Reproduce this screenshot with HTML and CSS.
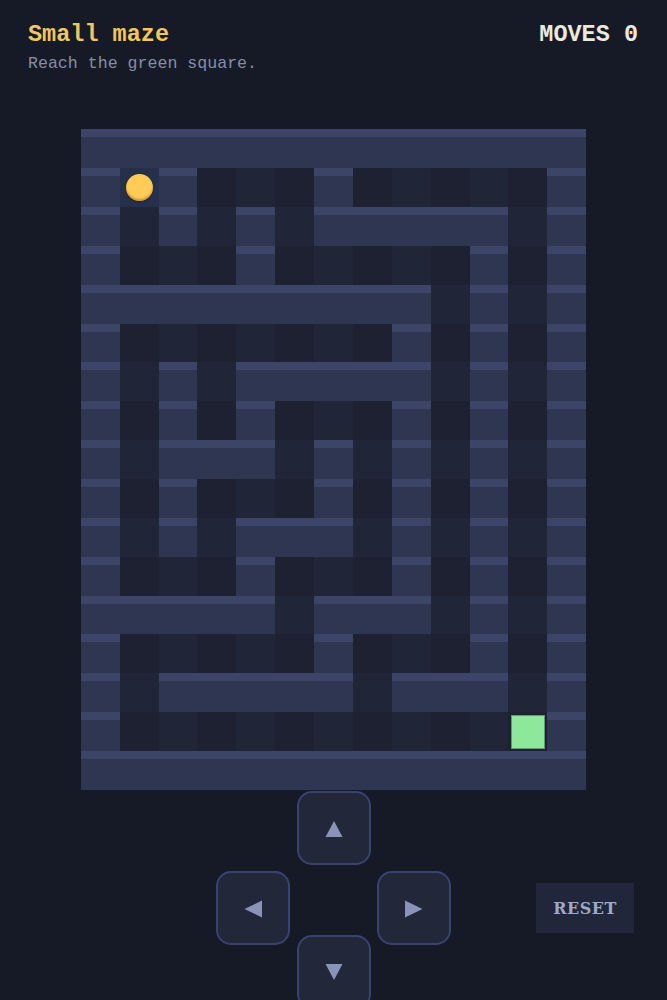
FILE: index.html
```html
<!DOCTYPE html>
<html lang="en">
<head>
<meta charset="utf-8">
<title>Small maze</title>
<link rel="stylesheet" href="styles.css">
</head>
<body>
<header class="top">
  <div class="heading">
    <h1 class="title">Small maze</h1>
    <p class="hint">Reach the green square.</p>
  </div>
  <div class="moves">MOVES 0</div>
</header>

<main class="board">
  <div class="maze">
    <!-- row 0 -->
    <div class="w"></div><div class="w"></div><div class="w"></div><div class="w"></div><div class="w"></div><div class="w"></div><div class="w"></div><div class="w"></div><div class="w"></div><div class="w"></div><div class="w"></div><div class="w"></div><div class="w"></div>
    <!-- row 1 -->
    <div class="w"></div><div class="start"><span class="player"></span></div><div class="w"></div><div class="d"></div><div class="l"></div><div class="d"></div><div class="w"></div><div class="d"></div><div class="l"></div><div class="d"></div><div class="l"></div><div class="d"></div><div class="w"></div>
    <!-- row 2 -->
    <div class="w"></div><div class="l"></div><div class="w"></div><div class="l"></div><div class="w"></div><div class="l"></div><div class="w"></div><div class="w"></div><div class="w"></div><div class="w"></div><div class="w"></div><div class="l"></div><div class="w"></div>
    <!-- row 3 -->
    <div class="w"></div><div class="d"></div><div class="l"></div><div class="d"></div><div class="w"></div><div class="d"></div><div class="l"></div><div class="d"></div><div class="l"></div><div class="d"></div><div class="w"></div><div class="d"></div><div class="w"></div>
    <!-- row 4 -->
    <div class="w"></div><div class="w"></div><div class="w"></div><div class="w"></div><div class="w"></div><div class="w"></div><div class="w"></div><div class="w"></div><div class="w"></div><div class="l"></div><div class="w"></div><div class="l"></div><div class="w"></div>
    <!-- row 5 -->
    <div class="w"></div><div class="d"></div><div class="l"></div><div class="d"></div><div class="l"></div><div class="d"></div><div class="l"></div><div class="d"></div><div class="w"></div><div class="d"></div><div class="w"></div><div class="d"></div><div class="w"></div>
    <!-- row 6 -->
    <div class="w"></div><div class="l"></div><div class="w"></div><div class="l"></div><div class="w"></div><div class="w"></div><div class="w"></div><div class="w"></div><div class="w"></div><div class="l"></div><div class="w"></div><div class="l"></div><div class="w"></div>
    <!-- row 7 -->
    <div class="w"></div><div class="d"></div><div class="w"></div><div class="d"></div><div class="w"></div><div class="d"></div><div class="l"></div><div class="d"></div><div class="w"></div><div class="d"></div><div class="w"></div><div class="d"></div><div class="w"></div>
    <!-- row 8 -->
    <div class="w"></div><div class="l"></div><div class="w"></div><div class="w"></div><div class="w"></div><div class="l"></div><div class="w"></div><div class="l"></div><div class="w"></div><div class="l"></div><div class="w"></div><div class="l"></div><div class="w"></div>
    <!-- row 9 -->
    <div class="w"></div><div class="d"></div><div class="w"></div><div class="d"></div><div class="l"></div><div class="d"></div><div class="w"></div><div class="d"></div><div class="w"></div><div class="d"></div><div class="w"></div><div class="d"></div><div class="w"></div>
    <!-- row 10 -->
    <div class="w"></div><div class="l"></div><div class="w"></div><div class="l"></div><div class="w"></div><div class="w"></div><div class="w"></div><div class="l"></div><div class="w"></div><div class="l"></div><div class="w"></div><div class="l"></div><div class="w"></div>
    <!-- row 11 -->
    <div class="w"></div><div class="d"></div><div class="l"></div><div class="d"></div><div class="w"></div><div class="d"></div><div class="l"></div><div class="d"></div><div class="w"></div><div class="d"></div><div class="w"></div><div class="d"></div><div class="w"></div>
    <!-- row 12 -->
    <div class="w"></div><div class="w"></div><div class="w"></div><div class="w"></div><div class="w"></div><div class="l"></div><div class="w"></div><div class="w"></div><div class="w"></div><div class="l"></div><div class="w"></div><div class="l"></div><div class="w"></div>
    <!-- row 13 -->
    <div class="w"></div><div class="d"></div><div class="l"></div><div class="d"></div><div class="l"></div><div class="d"></div><div class="w"></div><div class="d"></div><div class="l"></div><div class="d"></div><div class="w"></div><div class="d"></div><div class="w"></div>
    <!-- row 14 -->
    <div class="w"></div><div class="l"></div><div class="w"></div><div class="w"></div><div class="w"></div><div class="w"></div><div class="w"></div><div class="l"></div><div class="w"></div><div class="w"></div><div class="w"></div><div class="l"></div><div class="w"></div>
    <!-- row 15 -->
    <div class="w"></div><div class="d"></div><div class="l"></div><div class="d"></div><div class="l"></div><div class="d"></div><div class="l"></div><div class="d"></div><div class="l"></div><div class="d"></div><div class="l"></div><div class="d goal-cell"><span class="goal"></span></div><div class="w"></div>
    <!-- row 16 -->
    <div class="w"></div><div class="w"></div><div class="w"></div><div class="w"></div><div class="w"></div><div class="w"></div><div class="w"></div><div class="w"></div><div class="w"></div><div class="w"></div><div class="w"></div><div class="w"></div><div class="w"></div>
  </div>
</main>

<section class="controls">
  <button class="pad up" aria-label="Up">
    <svg viewBox="0 0 18 18" width="18" height="18"><polygon points="9,1 17.5,17 0.5,17"/></svg>
  </button>
  <button class="pad left" aria-label="Left">
    <svg viewBox="0 0 18 18" width="18" height="18"><polygon points="0.5,9 18,0.5 18,17.5"/></svg>
  </button>
  <button class="pad right" aria-label="Right">
    <svg viewBox="0 0 18 18" width="18" height="18"><polygon points="17.5,9 0,0.5 0,17.5"/></svg>
  </button>
  <button class="reset">RESET</button>
  <button class="pad down" aria-label="Down">
    <svg viewBox="0 0 18 18" width="18" height="18"><polygon points="9,17 17.5,1 0.5,1"/></svg>
  </button>
</section>
</body>
</html>
```

FILE: styles.css
```css
html, body {
  margin: 0;
  padding: 0;
}

body {
  background: #161a26;
  font-family: "Liberation Mono", "Courier New", monospace;
  color: #e9e8e0;
  overflow: hidden;
}

.top {
  display: flex;
  justify-content: space-between;
  align-items: flex-start;
  padding: 21px 29px 0 28px;
}

.title {
  margin: 0;
  font-size: 23.5px;
  line-height: 28px;
  font-weight: bold;
  color: #f1c75c;
}

.hint {
  margin: 5px 0 0;
  font-size: 16.6px;
  line-height: 20px;
  color: #868daa;
}

.moves {
  font-size: 23.5px;
  line-height: 28px;
  font-weight: bold;
  color: #ebe9df;
}

.board {
  display: flex;
  justify-content: center;
  margin-top: 55.3px;
}

.maze {
  --cell: 38.87px;
  display: grid;
  grid-template-columns: repeat(13, var(--cell));
  grid-auto-rows: var(--cell);
}

.w {
  background: linear-gradient(#3c4568 0, #3c4568 8px, #2f3652 8px, #2f3652 100%);
}

.d {
  background: #1d2131;
}

.l {
  background: #212538;
}

.start {
  background: #27304b;
  display: flex;
  align-items: center;
  justify-content: center;
}

.player {
  width: 27px;
  height: 27px;
  border-radius: 50%;
  background: #ffcc58;
  box-shadow: inset 0 -2px 2px rgba(170, 110, 10, 0.55), 0 1px 2px rgba(0, 0, 0, 0.25);
}

.goal-cell {
  display: flex;
  align-items: center;
  justify-content: center;
}

.goal {
  width: 32px;
  height: 32px;
  background: #8ee89b;
  border: 1px solid #5f9c6b;
}

.controls {
  display: grid;
  grid-template-columns: 1fr 74px 74px 74px 1fr;
  grid-template-rows: 74px 74px 74px;
  column-gap: 6.5px;
  row-gap: 6.5px;
  margin-top: 0.6px;
}

.pad {
  box-sizing: border-box;
  width: 74px;
  height: 74px;
  padding: 0;
  margin: 0;
  background: #22273a;
  border: 2px solid #3a4370;
  border-radius: 15px;
  display: flex;
  align-items: center;
  justify-content: center;
  fill: #8a93b8;
}

.pad svg {
  display: block;
}

.up {
  grid-column: 3;
  grid-row: 1;
}

.up svg {
  margin-top: 2px;
}

.left {
  grid-column: 2;
  grid-row: 2;
}

.left svg {
  margin-left: -1px;
  margin-top: 1px;
}

.right {
  grid-column: 4;
  grid-row: 2;
}

.right svg {
  margin-top: 1px;
}

.down {
  grid-column: 3;
  grid-row: 3;
  margin-top: -16.7px;
}

.reset {
  grid-column: 5;
  grid-row: 2;
  justify-self: end;
  align-self: center;
  margin: 0 33px 0 0;
  width: 98px;
  height: 50px;
  padding: 0;
  border: none;
  border-radius: 1px;
  background: #22263a;
  color: #a0a8c7;
  font-family: "DejaVu Serif", serif;
  font-size: 16px;
  font-weight: bold;
  letter-spacing: 0.5px;
}
```
